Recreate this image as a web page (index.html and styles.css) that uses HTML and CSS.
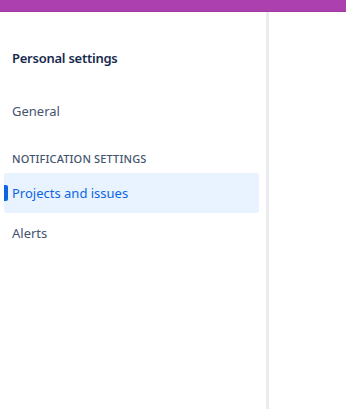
FILE: index.html
```html
<!DOCTYPE html>
<html lang="en">
<head>
  <meta charset="UTF-8">
  <meta name="viewport" content="width=device-width, initial-scale=1.0">
  <title>Personal settings</title>
  <link rel="stylesheet" href="styles.css">
</head>
<body>

  <!-- Thin coloured bar on top -->
  <div class="top-bar"></div>

  <div class="layout">
    <!-- Sidebar navigation -->
    <nav class="sidebar">
      <div class="sidebar-title">Personal settings</div>

      <div class="nav-item">General</div>

      <div class="group-title">Notification settings</div>
      <div class="nav-item active">Projects and issues</div>
      <div class="nav-item">Alerts</div>
    </nav>

    <div class="content"></div>
  </div>

</body>
</html>
```

FILE: styles.css
```css
html, body {
  height: 100%;
}
body {
  margin: 0;
  display: flex;
  flex-direction: column;
  font-family: 'Noto Sans', 'Open Sans', Arial, sans-serif;
  background: #fff;
  color: #172b4d;
}

.top-bar {
  height: 12px;
  background: #ab40ae;
  box-shadow: inset 0 -1px 0 #9c3aa0;
  flex-shrink: 0;
}

.layout {
  display: flex;
  flex: 1;
}

/* Sidebar */
.sidebar {
  width: 255px;
  padding: 36px 7px 0 4px;
  border-right: 3px solid #ebecf0;
}
.sidebar-title {
  padding-left: 8px;
  font-size: 13px;
  font-weight: 600;
  letter-spacing: -0.25px;
  line-height: 20px;
  margin-bottom: 23px;
}
.group-title {
  padding-left: 8px;
  margin: 20px 0 6px;
  font-size: 11px;
  font-weight: 500;
  letter-spacing: 0.15px;
  line-height: 16px;
  text-transform: uppercase;
  color: #44546f;
}
.nav-item {
  position: relative;
  height: 40px;
  padding-left: 8px;
  display: flex;
  align-items: center;
  font-size: 13px;
  color: #44546f;
  border-radius: 3px;
  cursor: pointer;
}
.nav-item.active {
  background: #e9f2ff;
  color: #0c66e4;
}
.nav-item.active::before {
  content: "";
  position: absolute;
  left: 0;
  top: 12px;
  width: 4px;
  height: 16px;
  background: #0c66e4;
  border-radius: 0 2px 2px 0;
}

.content {
  flex: 1;
}
```
